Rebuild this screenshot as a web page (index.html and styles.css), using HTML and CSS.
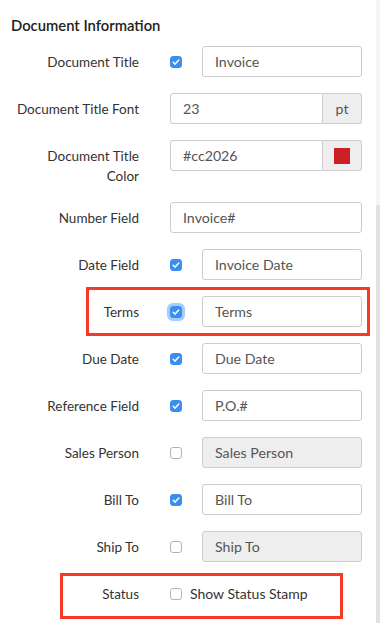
FILE: index.html
```html
<!DOCTYPE html>
<html lang="en">
<head>
    <meta charset="UTF-8">
    <meta name="viewport" content="width=device-width, initial-scale=1.0">
    <title>Document Information</title>
    <link rel="stylesheet" href="styles.css">
</head>
<body>
    <div class="page">
        <div class="main">
            <div class="section-title">Document Information</div>

            <div class="row">
                <label class="row-label">Document Title</label>
                <div class="row-control">
                    <input type="checkbox" class="check" checked>
                    <input type="text" class="field" value="Invoice">
                </div>
            </div>

            <div class="row">
                <label class="row-label">Document Title Font</label>
                <div class="row-control">
                    <div class="input-group">
                        <input type="text" class="field" value="23">
                        <span class="addon">pt</span>
                    </div>
                </div>
            </div>

            <div class="row">
                <label class="row-label">Document Title Color</label>
                <div class="row-control">
                    <div class="input-group">
                        <input type="text" class="field" value="#cc2026">
                        <span class="addon"><span class="swatch"></span></span>
                    </div>
                </div>
            </div>

            <div class="row">
                <label class="row-label">Number Field</label>
                <div class="row-control">
                    <input type="text" class="field" value="Invoice#">
                </div>
            </div>

            <div class="row">
                <label class="row-label">Date Field</label>
                <div class="row-control">
                    <input type="checkbox" class="check" checked>
                    <input type="text" class="field" value="Invoice Date">
                </div>
            </div>

            <div class="row highlight highlight-terms">
                <label class="row-label">Terms</label>
                <div class="row-control">
                    <input type="checkbox" class="check focused" checked>
                    <input type="text" class="field" value="Terms">
                </div>
            </div>

            <div class="row">
                <label class="row-label">Due Date</label>
                <div class="row-control">
                    <input type="checkbox" class="check" checked>
                    <input type="text" class="field" value="Due Date">
                </div>
            </div>

            <div class="row">
                <label class="row-label">Reference Field</label>
                <div class="row-control">
                    <input type="checkbox" class="check" checked>
                    <input type="text" class="field" value="P.O.#">
                </div>
            </div>

            <div class="row">
                <label class="row-label">Sales Person</label>
                <div class="row-control">
                    <input type="checkbox" class="check">
                    <input type="text" class="field" value="Sales Person" disabled>
                </div>
            </div>

            <div class="row">
                <label class="row-label">Bill To</label>
                <div class="row-control">
                    <input type="checkbox" class="check" checked>
                    <input type="text" class="field" value="Bill To">
                </div>
            </div>

            <div class="row">
                <label class="row-label">Ship To</label>
                <div class="row-control">
                    <input type="checkbox" class="check">
                    <input type="text" class="field" value="Ship To" disabled>
                </div>
            </div>

            <div class="row highlight highlight-status">
                <label class="row-label">Status</label>
                <div class="row-control">
                    <label class="check-label">
                        <input type="checkbox" class="check">
                        Show Status Stamp
                    </label>
                </div>
            </div>
        </div>
        <div class="scroll-track">
            <div class="scroll-thumb"></div>
        </div>
    </div>
</body>
</html>
```

FILE: styles.css
```css
body {
    margin: 0;
    font-family: Lato, "Open Sans", Arial, sans-serif;
    color: #333;
    background: #fff;
}
.page {
    display: flex;
    width: 380px;
    height: 623px;
    overflow: hidden;
}
.main {
    flex: 1;
}
.scroll-track {
    width: 4px;
    background: #f4f4f4;
}
.scroll-thumb {
    margin-top: 205px;
    height: 420px;
    background: #e2e2e2;
}
.section-title {
    padding: 15px 0 0 11px;
    font-size: 14.8px;
    line-height: 20px;
    font-weight: 600;
    color: #222;
    margin-bottom: 11px;
}
.row {
    display: flex;
    align-items: flex-start;
    margin-bottom: 16px;
}
.row-label {
    width: 127px;
    padding: 6px 0 0 12px;
    text-align: right;
    font-size: 13.5px;
    line-height: 20px;
    color: #333;
}
.row-control {
    display: flex;
    align-items: center;
    margin-left: 31px;
    width: 192px;
    height: 31px;
}
.check {
    appearance: none;
    width: 12px;
    height: 12px;
    margin: 0 20px 0 0;
    flex-shrink: 0;
    box-sizing: border-box;
    border: 1px solid #b5b5b5;
    border-radius: 3px;
    background: #fff;
}
.check:checked {
    border-color: #3a8ef0;
    background: #3a8ef0 url("data:image/svg+xml,%3Csvg xmlns='http://www.w3.org/2000/svg' viewBox='0 0 12 12'%3E%3Cpath d='M3.2 6.2l1.9 1.9 3.7-4' fill='none' stroke='%23fff' stroke-width='1.5' stroke-linecap='round' stroke-linejoin='round'/%3E%3C/svg%3E") center / 12px 12px no-repeat;
}
.check.focused {
    box-shadow: 0 0 0 3px rgba(58, 142, 240, 0.45);
}
.field {
    flex: 1;
    min-width: 0;
    height: 31px;
    box-sizing: border-box;
    padding: 0 12px;
    border: 1px solid #ccc;
    border-radius: 3px;
    font-family: inherit;
    font-size: 14.2px;
    color: #555;
    background: #fff;
}
.field:disabled {
    background: #eee;
    color: #555;
}
.input-group {
    display: flex;
    width: 100%;
}
.input-group .field {
    border-radius: 3px 0 0 3px;
}
.addon {
    display: flex;
    align-items: center;
    justify-content: center;
    width: 39px;
    height: 31px;
    box-sizing: border-box;
    border: 1px solid #ccc;
    border-left: none;
    border-radius: 0 3px 3px 0;
    background: #eee;
    font-size: 14.2px;
    color: #555;
}
.swatch {
    width: 16px;
    height: 16px;
    background: #cc2026;
}
.check-label {
    display: flex;
    align-items: center;
    font-size: 14px;
    color: #333;
}
.check-label .check {
    margin-right: 8px;
}
.highlight {
    position: relative;
}
.highlight::before {
    content: "";
    position: absolute;
    border: 3px solid #f53b25;
    pointer-events: none;
}
.highlight-terms::before {
    left: 86px;
    right: 6px;
    top: -9px;
    bottom: -9px;
}
.highlight-status::before {
    left: 60px;
    right: 33px;
    top: -5px;
    bottom: -10px;
}
```
